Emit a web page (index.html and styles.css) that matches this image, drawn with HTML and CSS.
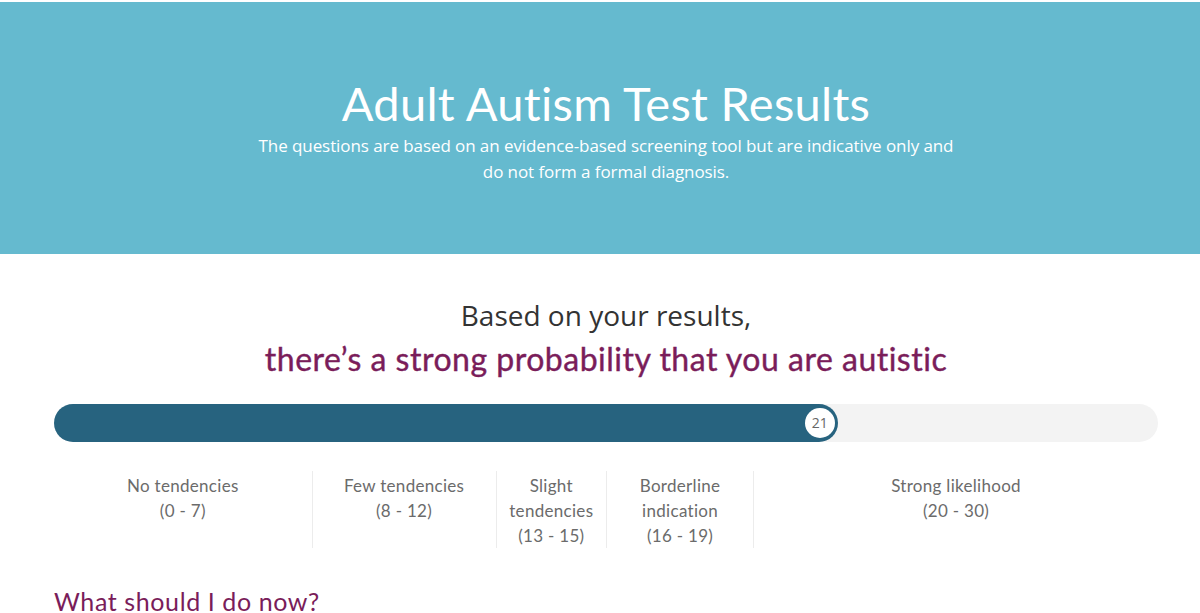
FILE: index.html
```html
<!DOCTYPE html>
<html lang="en">
<head>
<meta charset="utf-8">
<title>Adult Autism Test Results</title>
<link rel="stylesheet" href="styles.css">
</head>
<body>
<header class="hero">
  <h1 class="hero-title">Adult Autism Test Results</h1>
  <p class="hero-sub">The questions are based on an evidence-based screening tool but are indicative only and<br>do not form a formal diagnosis.</p>
</header>
<main class="results">
  <p class="lead">Based on your results,</p>
  <h2 class="verdict">there’s a strong probability that you are autistic</h2>
  <div class="bar">
    <div class="bar-fill" style="width: 71%">
      <span class="bar-score">21</span>
    </div>
  </div>
  <div class="scale">
    <div class="scale-col" style="width: 23.33%">No tendencies<br>(0 - 7)</div>
    <div class="scale-col" style="width: 16.67%">Few tendencies<br>(8 - 12)</div>
    <div class="scale-col" style="width: 10%">Slight<br>tendencies<br>(13 - 15)</div>
    <div class="scale-col" style="width: 13.33%">Borderline<br>indication<br>(16 - 19)</div>
    <div class="scale-col" style="width: 36.67%">Strong likelihood<br>(20 - 30)</div>
  </div>
  <h3 class="next">What should I do now?</h3>
</main>
</body>
</html>
```
FILE: styles.css
```css
html, body {
  margin: 0;
  padding: 0;
  background: #ffffff;
}
body {
  padding-top: 2px;
  font-family: "Open Sans", "Liberation Sans", sans-serif;
  overflow: hidden;
}
.hero {
  background: #65bacf;
  height: 252px;
  box-sizing: border-box;
  padding: 74px 0 0 12px;
  text-align: center;
  color: #ffffff;
}
.hero-title {
  margin: 0;
  font-family: Lato, "Noto Sans", sans-serif;
  font-weight: 400;
  font-size: 47px;
  line-height: 54px;
  letter-spacing: 0.3px;
}
.hero-sub {
  margin: 3px 0 0;
  font-size: 17px;
  line-height: 26px;
  letter-spacing: -0.08px;
}
.results {
  padding: 42px 42px 0 54px;
}
.lead {
  margin: 0;
  text-align: center;
  font-size: 28px;
  line-height: 38px;
  color: #333333;
}
.verdict {
  margin: 5px 0 0;
  text-align: center;
  font-family: Lato, "Noto Sans", sans-serif;
  font-weight: 400;
  font-size: 32px;
  line-height: 40px;
  letter-spacing: 0.5px;
  color: #7a1d5a;
  -webkit-text-stroke: 0.4px #7a1d5a;
}
.bar {
  margin-top: 25px;
  height: 38px;
  border-radius: 19px;
  background: #f3f3f3;
}
.bar-fill {
  position: relative;
  height: 100%;
  border-radius: 19px;
  background: #27637f;
}
.bar-score {
  position: absolute;
  right: 3px;
  top: 4px;
  width: 30px;
  height: 30px;
  border-radius: 50%;
  background: #ffffff;
  color: #666666;
  font-size: 14px;
  line-height: 30px;
  text-align: center;
}
.scale {
  display: flex;
  margin-top: 29px;
}
.scale-col {
  flex: none;
  box-sizing: border-box;
  text-align: center;
  font-family: Lato, "Noto Sans", sans-serif;
  font-size: 17px;
  line-height: 25px;
  letter-spacing: 0.3px;
  color: #6b6b6b;
  border-left: 1px solid #ececec;
  padding: 2px 4px 0;
  min-height: 76px;
}
.scale-col:first-child {
  border-left: none;
}
.next {
  margin: 38px 0 0;
  font-family: Lato, "Noto Sans", sans-serif;
  font-weight: 400;
  font-size: 25px;
  line-height: 30px;
  letter-spacing: 0.6px;
  color: #7a1d5a;
}
```
